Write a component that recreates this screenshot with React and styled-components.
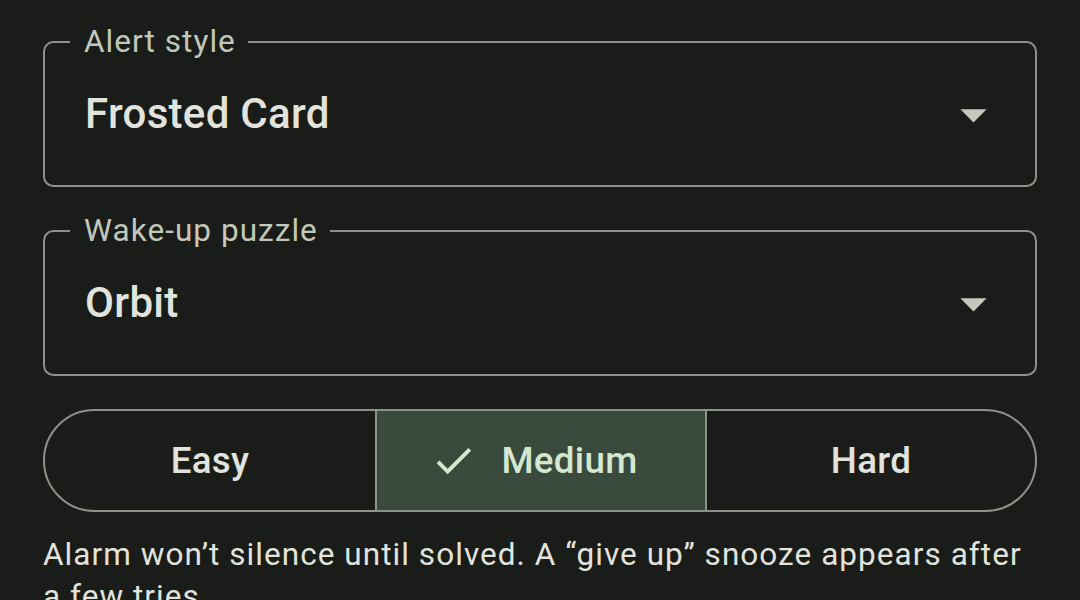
import React from "react";
import styled, { createGlobalStyle } from "styled-components";

const GlobalStyle = createGlobalStyle`
  html, body {
    margin: 0;
    padding: 0;
    background: #191c18;
  }
  body {
    font-family: Roboto, "Noto Sans", "Liberation Sans", sans-serif;
    -webkit-font-smoothing: antialiased;
  }
  * { box-sizing: border-box; }
`;

const Page = styled.div`
  display: flex;
  flex-direction: column;
  padding: 41px 43px 0 43px;
  width: 1080px;
  height: 600px;
  overflow: hidden;
`;

const Field = styled.div`
  position: relative;
  flex: none;
  height: 146px;
  border: 2.6px solid #8c9388;
  border-radius: 10.5px;
  display: flex;
  align-items: center;
  padding: 0 30px 0 40px;
  margin-bottom: ${(p) => p.$gap || 0}px;
`;

const FieldLabel = styled.span`
  position: absolute;
  top: -22px;
  left: 25px;
  padding: 0 12px 0 14px;
  background: #191c18;
  color: #c2c8bc;
  font-size: 31.5px;
  line-height: 42px;
  letter-spacing: 1.05px;
`;

const FieldValue = styled.span`
  flex: 1;
  color: #e2e3dd;
  font-size: 42px;
  line-height: 63px;
  letter-spacing: 0.3px;
  font-weight: 500;
  margin-top: -2px;
`;

const ArrowIcon = styled.svg`
  width: 63px;
  height: 63px;
  flex: none;
  fill: #c2c8bc;
`;

const Segmented = styled.div`
  display: grid;
  flex: none;
  grid-template-columns: repeat(3, 1fr);
  height: 103px;
  border: 2.6px solid #8c9388;
  border-radius: 999px;
  overflow: hidden;
`;

const Segment = styled.div`
  display: flex;
  align-items: center;
  justify-content: center;
  gap: 24px;
  background: ${(p) => (p.$selected ? "#3a4b3d" : "transparent")};
  color: ${(p) => (p.$selected ? "#d4e8d1" : "#e2e3dd")};
  border-left: ${(p) => (p.$first ? "none" : "2.6px solid #8c9388")};
  font-size: 36.75px;
  font-weight: 500;
  letter-spacing: 0.3px;
  padding-right: ${(p) => (p.$selected ? "14px" : "0")};
`;

const CheckIcon = styled.svg`
  width: 47px;
  height: 47px;
  fill: #d4e8d1;
  flex: none;
`;

const Supporting = styled.p`
  margin: 22px 0 0 0;
  flex: none;
  color: #e2e3dd;
  font-size: 31.5px;
  line-height: 42px;
  letter-spacing: 1.05px;
`;

function Dropdown({ label, value, gap }) {
  return (
    <Field $gap={gap}>
      <FieldLabel>{label}</FieldLabel>
      <FieldValue>{value}</FieldValue>
      <ArrowIcon viewBox="0 0 24 24">
        <path d="M7 10l5 5 5-5z" />
      </ArrowIcon>
    </Field>
  );
}

export default function App() {
  const levels = ["Easy", "Medium", "Hard"];
  const selected = "Medium";
  return (
    <>
      <GlobalStyle />
      <Page>
        <Dropdown label="Alert style" value="Frosted Card" gap={43} />
        <Dropdown label="Wake-up puzzle" value="Orbit" gap={33} />
        <Segmented>
          {levels.map((l, i) => (
            <Segment key={l} $first={i === 0} $selected={l === selected}>
              {l === selected && (
                <CheckIcon viewBox="0 0 24 24">
                  <path d="M9 16.17L4.83 12l-1.42 1.41L9 19 21 7l-1.41-1.41z" />
                </CheckIcon>
              )}
              {l}
            </Segment>
          ))}
        </Segmented>
        <Supporting>
          Alarm won’t silence until solved. A “give up” snooze appears after a few tries.
        </Supporting>
      </Page>
    </>
  );
}
